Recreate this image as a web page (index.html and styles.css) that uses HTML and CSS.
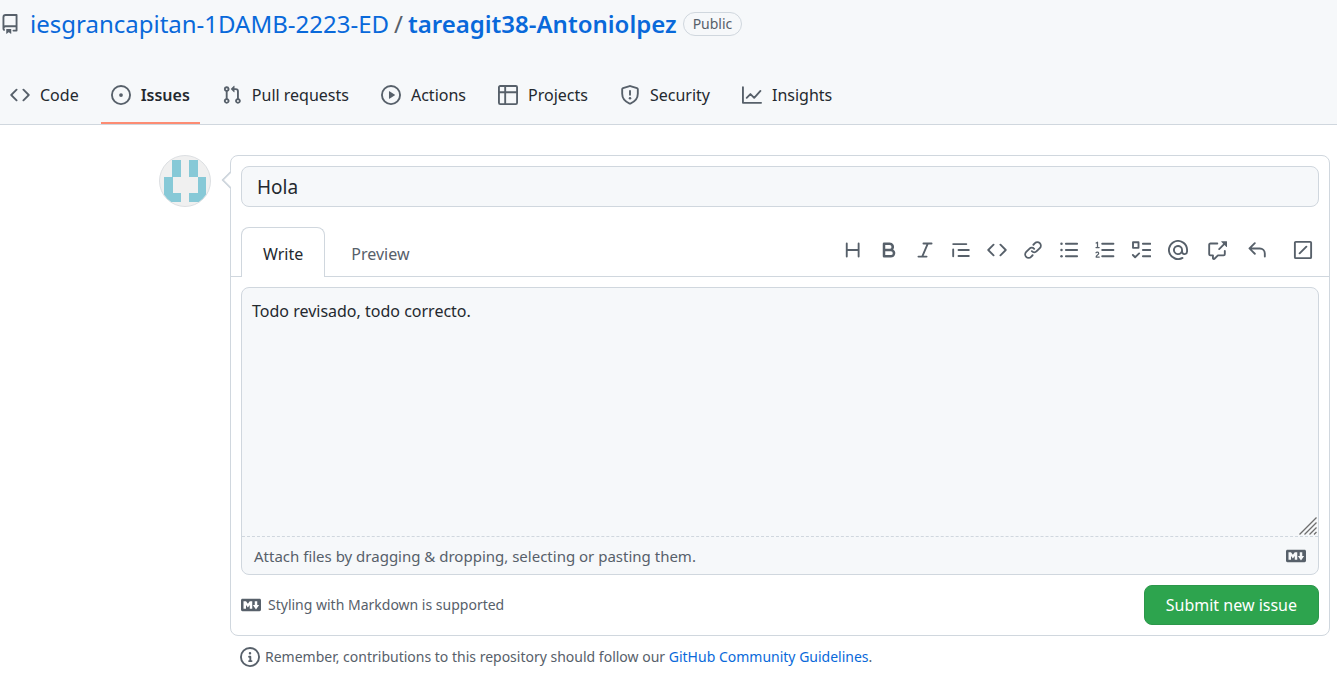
FILE: index.html
```html
<!DOCTYPE html>
<html lang="en">
<head>
<meta charset="utf-8">
<meta name="viewport" content="width=device-width, initial-scale=1">
<title>New issue</title>
<link rel="stylesheet" href="styles.css">
</head>
<body>
<header class="repo-header">
  <div class="repo-title">
    <svg class="icon repo-icon" viewBox="0 0 16 16" aria-hidden="true"><path fill-rule="evenodd" d="M2 2.500A2.500 2.500 0 014.500 0h8.750a.75.75 0 01.75.75v12.500a.75.75 0 01-.75.75h-2.500a.75.75 0 110-1.500h1.750v-2h-8a1 1 0 00-.714 1.700.75.75 0 01-1.072 1.050A2.495 2.495 0 012 11.500v-9zm10.500-1V9h-8c-.356 0-.694.074-1 .208V2.500a1 1 0 011-1h8zM5 12.250v3.250a.25.25 0 00.4.2l1.450-1.087a.25.25 0 01.3 0L8.600 15.700a.25.25 0 00.4-.2v-3.250a.25.25 0 00-.25-.25h-3.500a.25.25 0 00-.25.25z"/></svg>
    <h1 class="repo-path"><a href="#">iesgrancapitan-1DAMB-2223-ED</a><span class="slash">/</span><a class="repo-name" href="#">tareagit38-Antoniolpez</a></h1>
    <span class="badge">Public</span>
  </div>
  <nav class="tabs" aria-label="Repository">
    <a class="tab" href="#"><svg class="icon" viewBox="0 0 16 16"><path d="M4.72 3.22a.75.75 0 011.06 1.06L2.06 8l3.72 3.72a.75.75 0 11-1.06 1.06L.47 8.53a.75.75 0 010-1.06l4.25-4.25zm6.56 0a.75.75 0 10-1.06 1.06L13.94 8l-3.72 3.72a.75.75 0 101.06 1.06l4.25-4.25a.75.75 0 000-1.06l-4.25-4.25z"/></svg>Code</a>
    <a class="tab selected" href="#" aria-current="page"><svg class="icon" viewBox="0 0 16 16"><circle class="line" cx="8" cy="8" r="7.25"/><circle cx="8" cy="8" r="1.5"/></svg>Issues</a>
    <a class="tab" href="#"><svg class="icon" viewBox="0 0 16 16"><path fill-rule="evenodd" d="M7.177 3.073L9.573.677A.25.25 0 0110 .854v4.792a.25.25 0 01-.427.177L7.177 3.427a.25.25 0 010-.354zM3.75 2.5a.75.75 0 100 1.5.75.75 0 000-1.5zm-2.25.75a2.25 2.25 0 113 2.122v5.256a2.251 2.251 0 11-1.5 0V5.372A2.25 2.25 0 011.5 3.25zM11 2.5h-1V4h1a1 1 0 011 1v5.628a2.251 2.251 0 101.5 0V5A2.5 2.5 0 0011 2.5zm1 10.25a.75.75 0 111.5 0 .75.75 0 01-1.5 0zM3.75 12a.75.75 0 100 1.5.75.75 0 000-1.5z"/></svg>Pull requests</a>
    <a class="tab" href="#"><svg class="icon" viewBox="0 0 16 16"><circle class="line" cx="8" cy="8" r="7.25"/><path d="M6.38 5.22v5.56c0 .2.2.32.38.22l4.36-2.78a.26.26 0 000-.44L6.76 5a.25.25 0 00-.38.22z"/></svg>Actions</a>
    <a class="tab" href="#"><svg class="icon" viewBox="0 0 16 16"><path class="line" d="M1.75.75h12.5a1 1 0 011 1v12.5a1 1 0 01-1 1H1.75a1 1 0 01-1-1V1.75a1 1 0 011-1zM.75 5.75h14.5M5.75.75v14.5"/></svg>Projects</a>
    <a class="tab" href="#"><svg class="icon" viewBox="0 0 16 16"><path class="line" d="M7.7.85L2.4 2.55a.95.95 0 00-.65.95V7c0 3.6 2.1 6.2 5.95 7.85a.8.8 0 00.6 0C12.150 13.2 14.25 10.6 14.25 7V3.500a.95.95 0 00-.65-.95L8.300.85a1 1 0 00-.6 0zM8 4.75v3"/><circle cx="8" cy="10.500" r="1"/></svg>Security</a>
    <a class="tab" href="#"><svg class="icon" viewBox="0 0 16 16"><path class="line" d="M.75 1.75v12.5h14.5M3.750 10.250l3-3 3 3 5-5.500"/></svg>Insights</a>
  </nav>
</header>
<main class="new-issue">
  <svg class="avatar" viewBox="0 0 52 52" role="img" aria-label="User avatar"><defs><clipPath id="disc"><circle cx="26" cy="26" r="25"/></clipPath></defs><circle cx="26" cy="26" r="25.500" fill="#f0f0f0" stroke="#dcdfe2"/><path clip-path="url(#disc)" fill="#87c9d7" d="M13 5h9v17h-8v16h8v9H5V22h8zM30 5h9v17h8v25H30v-9h9V22h-9z"/></svg>
  <div class="column">
    <form class="composer" onsubmit="return false">
      <input class="title-input" type="text" value="Hola" aria-label="Title">
      <div class="editor-head">
        <div class="editor-tabs">
          <button class="editor-tab active" type="button">Write</button>
          <button class="editor-tab" type="button">Preview</button>
        </div>
        <div class="toolbar">
          <button type="button" class="tool" aria-label="Heading"><svg class="icon" viewBox="0 0 16 16"><path class="line" d="M3 2.750v10.500M12.500 2.750v10.500M3 8h9.500"/></svg></button>
          <button type="button" class="tool" aria-label="Bold"><svg class="icon" viewBox="0 0 16 16"><path fill-rule="evenodd" d="M4 2a1 1 0 00-1 1v10a1 1 0 001 1h5.500a3.500 3.500 0 001.852-6.470A3.500 3.500 0 008.500 2H4zm4.500 5a1.500 1.500 0 100-3H5v3h3.500zM5 9v3h4.500a1.500 1.500 0 000-3H5z"/></svg></button>
          <button type="button" class="tool" aria-label="Italic"><svg class="icon" viewBox="0 0 16 16"><path d="M6 2.750A.75.75 0 016.750 2h6.500a.75.75 0 010 1.500h-2.505l-3.858 9H9.250a.75.75 0 010 1.500h-6.500a.75.75 0 010-1.500h2.505l3.858-9H6.750A.75.75 0 016 2.750z"/></svg></button>
          <button type="button" class="tool" aria-label="Quote"><svg class="icon" viewBox="0 0 16 16"><path class="line" d="M1.750 3.250h10.500M6 8h8.250M6 12.750h8.250M1.750 7.500v5.500"/></svg></button>
          <button type="button" class="tool" aria-label="Code"><svg class="icon" viewBox="0 0 16 16"><path d="M4.720 3.220a.75.75 0 011.060 1.060L2.060 8l3.720 3.720a.75.75 0 11-1.060 1.060L.47 8.530a.75.75 0 010-1.060l4.250-4.250zm6.560 0a.75.75 0 10-1.060 1.060L13.940 8l-3.720 3.720a.75.75 0 101.060 1.060l4.250-4.250a.75.75 0 000-1.060l-4.250-4.250z"/></svg></button>
          <button type="button" class="tool" aria-label="Link"><svg class="icon" viewBox="0 0 16 16"><path d="M7.775 3.275a.75.75 0 001.060 1.060l1.250-1.250a2 2 0 112.830 2.830l-2.500 2.500a2 2 0 01-2.830 0 .75.75 0 00-1.060 1.060 3.500 3.500 0 004.950 0l2.500-2.500a3.500 3.500 0 00-4.950-4.950l-1.250 1.250zm-4.690 9.640a2 2 0 010-2.830l2.500-2.500a2 2 0 012.830 0 .75.75 0 001.060-1.060 3.500 3.500 0 00-4.950 0l-2.500 2.500a3.500 3.500 0 004.950 4.950l1.250-1.250a.75.75 0 00-1.060-1.060l-1.250 1.250a2 2 0 01-2.830 0z"/></svg></button>
          <button type="button" class="tool" aria-label="Bulleted list"><svg class="icon" viewBox="0 0 16 16"><path class="line" d="M5.500 3h9M5.500 8h9M5.500 13h9"/><circle cx="2" cy="3" r="1"/><circle cx="2" cy="8" r="1"/><circle cx="2" cy="13" r="1"/></svg></button>
          <button type="button" class="tool" aria-label="Numbered list"><svg class="icon" viewBox="0 0 16 16"><path class="line" d="M5.750 3h9M5.750 8h9M5.750 13h9"/><path class="line thin" d="M.9 2.400l1.100-.6v4.200M.8 6h2.500M.8 10.200c.5-.8 2.200-.6 2.100.5 0 1-2 1.500-2 2.900h2.500"/></svg></button>
          <button type="button" class="tool" aria-label="Task list"><svg class="icon" viewBox="0 0 16 16"><path class="line" d="M9.500 3h6M9.500 8h6M9.500 13h6M1.600 1.750h4.400v4.500H1.600zM1.500 12l1.800 1.800L6.500 10.700"/></svg></button>
          <button type="button" class="tool mention" aria-label="Mention"><svg class="icon" viewBox="0 0 16 16"><path fill-rule="evenodd" d="M4.750 2.370a6.500 6.500 0 006.500 11.260.75.75 0 01.75 1.298 8 8 0 113.994-7.273.754.754 0 01.006.095v1.500a2.750 2.750 0 01-5.072 1.475A4 4 0 1112 8v1.250a1.250 1.250 0 002.500 0V7.867a6.500 6.500 0 00-9.750-5.496V2.370zM10.500 8a2.500 2.500 0 10-5 0 2.500 2.500 0 005 0z"/></svg></button>
          <button type="button" class="tool wide" aria-label="Reference"><svg class="icon" viewBox="0 0 16 16"><path d="M16 1.250v4.146a.25.25 0 01-.427.177L14.030 4.030l-3.750 3.750a.75.75 0 11-1.060-1.060l3.750-3.750-1.543-1.543A.25.25 0 0111.604 1h4.146a.25.25 0 01.25.25zM2.750 3.500a.25.25 0 00-.25.25v7.500c0 .138.112.25.25.25h2a.75.75 0 01.75.75v2.190l2.720-2.720a.75.75 0 01.53-.22h4.500a.25.25 0 00.25-.25v-2.500a.75.75 0 111.500 0v2.500A1.750 1.750 0 0113.250 13H9.060l-2.573 2.573A1.457 1.457 0 014 14.543V13H2.750A1.750 1.750 0 011 11.250v-7.500C1 2.784 1.784 2 2.750 2h5.500a.75.75 0 010 1.500h-5.500z"/></svg></button>
          <button type="button" class="tool wide" aria-label="Saved replies"><svg class="icon" viewBox="0 0 16 16"><path d="M6.780 1.970a.75.75 0 010 1.060L3.810 6h6.440A4.750 4.750 0 0115 10.750v2.500a.75.75 0 01-1.500 0v-2.500a3.250 3.250 0 00-3.250-3.250H3.810l2.970 2.970a.75.75 0 11-1.060 1.060L1.470 7.280a.75.75 0 010-1.060l4.250-4.250a.75.75 0 011.060 0z"/></svg></button>
          <button type="button" class="tool last" aria-label="Slash commands"><svg class="icon" viewBox="0 0 16 16"><path class="line" d="M2.250 1.500h11.500a.75.75 0 01.75.75v11.500a.75.75 0 01-.75.75H2.250a.75.75 0 01-.75-.75V2.250a.75.75 0 01.75-.75zM5.300 10.700l5.400-5.400"/></svg></button>
        </div>
      </div>
      <div class="editor-body">
        <div class="text-wrap">
          <textarea class="body-input" aria-label="Comment body">Todo revisado, todo correcto.</textarea>
          <svg class="grip" viewBox="0 0 18 18" aria-hidden="true"><path d="M.5 17.500l17-17M5.500 17.500l12-12M10.500 17.500l7-7M15 17.500l2.500-2.500"/></svg>
        </div>
        <div class="attach-row">
          <label class="attach">Attach files by dragging &amp; dropping, selecting or pasting them.<input class="hidden-input" type="file" multiple></label>
          <a class="md-link" href="#" aria-label="Markdown help"><svg class="icon" viewBox="0 0 16 16"><path fill-rule="evenodd" d="M14.850 3H1.150C.52 3 0 3.520 0 4.150v7.690C0 12.480.52 13 1.150 13h13.690c.64 0 1.150-.52 1.150-1.150v-7.700C16 3.520 15.480 3 14.850 3zM9 11H7V8L5.500 9.920 4 8v3H2V5h2l1.500 2L7 5h2v6zm2.990.5L9.500 8H11V5h2v3h1.500l-2.510 3.500z"/></svg></a>
        </div>
      </div>
      <div class="form-foot">
        <a class="styling" href="#"><svg class="icon" viewBox="0 0 16 16"><path fill-rule="evenodd" d="M14.850 3H1.150C.52 3 0 3.520 0 4.150v7.690C0 12.480.52 13 1.150 13h13.690c.64 0 1.150-.52 1.150-1.150v-7.700C16 3.520 15.480 3 14.850 3zM9 11H7V8L5.500 9.920 4 8v3H2V5h2l1.500 2L7 5h2v6zm2.990.5L9.500 8H11V5h2v3h1.500l-2.510 3.500z"/></svg>Styling with Markdown is supported</a>
        <button class="submit" type="submit">Submit new issue</button>
      </div>
    </form>
    <p class="note"><svg class="icon" viewBox="0 0 16 16"><circle class="line" cx="8" cy="8" r="7.250"/><path d="M6.500 7.750A.75.75 0 017.250 7h1a.75.75 0 01.75.75v2.750h.25a.75.75 0 010 1.500h-2a.75.75 0 010-1.500h.25v-2h-.25a.75.75 0 01-.75-.75zM8 6a1 1 0 100-2 1 1 0 000 2z"/></svg><span>Remember, contributions to this repository should follow our <a href="#">GitHub Community Guidelines</a>.</span></p>
  </div>
</main>
</body>
</html>
```

FILE: styles.css
```css
* {
  box-sizing: border-box;
}

body {
  margin: 0;
  background: #fff;
  color: #24292f;
  font-family: "Segoe UI", "Noto Sans", "Open Sans", sans-serif;
  font-size: 16px;
  line-height: 24px;
}

a {
  color: #0969da;
  text-decoration: none;
}

button,
input,
textarea {
  font: inherit;
  color: inherit;
}

.icon {
  width: 20px;
  height: 20px;
  flex: none;
  fill: #57606a;
}

.line {
  fill: none;
  stroke: #57606a;
  stroke-width: 1.5;
  stroke-linecap: round;
  stroke-linejoin: round;
}

.thin {
  stroke-width: 1;
}

.repo-header {
  background: #f6f8fa;
  border-bottom: 1px solid #d0d7de;
}

.repo-title {
  display: flex;
  align-items: center;
  height: 68px;
  padding-bottom: 20px;
}

.repo-icon {
  margin-right: 10px;
}

.repo-path {
  margin: 0;
  font-size: 24px;
  font-weight: 400;
  line-height: 32px;
}

.slash {
  margin: 0 5px;
  color: #57606a;
}

.repo-name {
  font-weight: 600;
}

.badge {
  margin-left: 6px;
  padding: 0 9px;
  border: 1px solid #d0d7de;
  border-radius: 12px;
  color: #57606a;
  font-size: 14px;
  line-height: 22px;
}

.tabs {
  display: flex;
  gap: 12px;
}

.tab {
  display: flex;
  align-items: center;
  gap: 10px;
  height: 56px;
  padding: 0 10px;
  border-bottom: 2px solid transparent;
  color: #24292f;
}

.selected {
  border-bottom-color: #fd8c73;
  font-weight: 600;
}

.new-issue {
  display: flex;
  align-items: flex-start;
  gap: 19px;
  padding: 30px 7px 0 159px;
}

.avatar {
  width: 52px;
  height: 52px;
  flex: none;
}

.column {
  flex: 1;
  min-width: 0;
}

.composer {
  position: relative;
  border: 1px solid #d0d7de;
  border-radius: 8px;
  padding-bottom: 10px;
}

/* Speech-bubble pointer towards the avatar */
.composer::before {
  content: "";
  position: absolute;
  top: 17px;
  left: -7px;
  width: 12px;
  height: 12px;
  border: 2px solid #d0d7de;
  border-top: 0;
  border-right: 0;
  background: #fff;
  clip-path: polygon(0 0, 100% 100%, 0 100%);
  transform: rotate(45deg);
}

.title-input {
  display: block;
  width: calc(100% - 20px);
  height: 41px;
  margin: 10px 10px 20px;
  padding: 0 15px;
  border: 1px solid #d0d7de;
  border-radius: 8px;
  background: #f6f8fa;
  font-size: 19px;
}

.editor-head {
  display: flex;
  justify-content: space-between;
  height: 50px;
  padding-left: 10px;
  border-bottom: 1px solid #d0d7de;
}

.editor-tabs {
  display: flex;
  gap: 4px;
}

.editor-tab {
  height: 50px;
  padding: 2px 21px 0;
  border: 1px solid transparent;
  border-bottom: 0;
  border-radius: 8px 8px 0 0;
  background: none;
  color: #57606a;
}

.active {
  border-color: #d0d7de;
  background: #fff;
  color: #24292f;
}

.toolbar {
  display: flex;
  align-items: center;
  height: 46px;
}

.tool {
  display: flex;
  justify-content: center;
  width: 36px;
  padding: 0;
  border: 0;
  background: none;
}

.mention {
  width: 38px;
}

.wide {
  width: 40px;
}

.last {
  margin: 0 8px;
}

.editor-body {
  margin: 10px;
  border: 1px solid #d0d7de;
  border-radius: 8px;
  background: #f6f8fa;
}

.text-wrap {
  position: relative;
}

.body-input {
  display: block;
  width: 100%;
  height: 249px;
  padding: 11px 10px;
  border: 0;
  border-bottom: 1px dashed #d0d7de;
  background: none;
  resize: none;
}

.grip {
  position: absolute;
  right: 1px;
  bottom: 2px;
  width: 18px;
  height: 18px;
  fill: none;
  stroke: #6e6e6e;
  stroke-width: 1.3;
}

.attach-row {
  display: flex;
  align-items: center;
  justify-content: space-between;
  height: 37px;
  padding: 0 12px;
  color: #57606a;
  font-size: 15px;
}

.hidden-input {
  position: absolute;
  width: 1px;
  height: 1px;
  overflow: hidden;
  opacity: 0;
}

.md-link {
  display: flex;
}

.form-foot {
  display: flex;
  align-items: center;
  justify-content: space-between;
  padding: 0 10px;
}

.styling {
  display: flex;
  align-items: center;
  gap: 7px;
  color: #57606a;
  font-size: 14px;
}

.submit {
  height: 40px;
  padding: 0 21px;
  border: 1px solid #2c974b;
  border-radius: 8px;
  background: #2da44e;
  color: #fff;
}

.note {
  display: flex;
  align-items: center;
  gap: 5px;
  margin: 9px 0 0 10px;
  color: #57606a;
  font-size: 14px;
}
```
